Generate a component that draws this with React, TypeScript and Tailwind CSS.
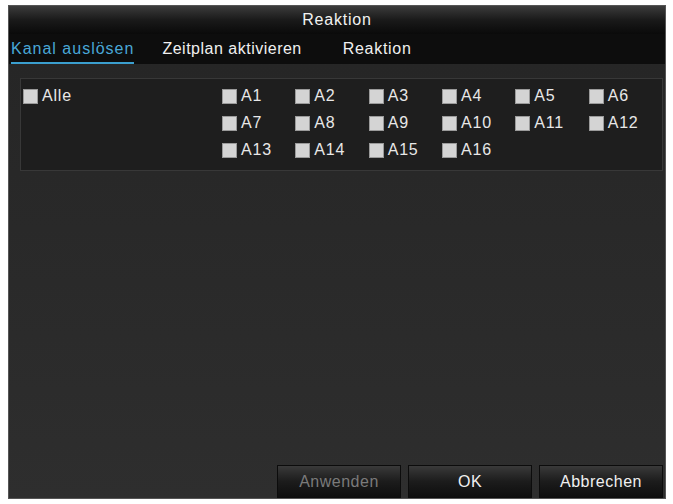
const channels = Array.from({ length: 16 }, (_, i) => `A${i + 1}`);

const Box = () => (
  <span className="inline-block w-[15px] h-[15px] bg-[#d4d4d4] border border-[#9a9a9a] shrink-0" />
);

const Check = ({ label }: { label: string }) => (
  <div className="flex items-center gap-[4px] h-[26px]">
    <Box />
    <span className="text-[16px] text-[#e8e8e8] tracking-[0.8px]">{label}</span>
  </div>
);

const FooterButton = ({ label, disabled }: { label: string; disabled?: boolean }) => (
  <button
    className={`w-[124px] h-[33px] border border-[#0c0c0c] bg-gradient-to-b from-[#3a3a3a] via-[#1c1c1c] to-[#0e0e0e] text-[16px] tracking-[0.5px] ${
      disabled ? "text-[#7a7a7a]" : "text-[#f0f0f0]"
    }`}
  >
    {label}
  </button>
);

export default function App() {
  return (
    <div className="w-[673px] h-[504px] bg-white pt-[5px] pl-[8px]" style={{ fontFamily: '"Liberation Sans", Arial, sans-serif' }}>
      <div className="w-[658px] h-[494px] flex flex-col bg-[#2c2c2c] border border-[#555]">
        <div className="h-[28px] flex items-center justify-center bg-gradient-to-b from-[#3c3c3c] via-[#1a1a1a] to-[#0a0a0a] text-[16px] tracking-[0.8px] text-[#f2f2f2]">
          Reaktion
        </div>
        <div className="h-[30px] flex items-end bg-[#0d0d0d] px-[2px] text-[16px] text-[#f0f0f0]">
          <span className="pb-[1px] border-b-2 border-[#3b9fcf] text-[#49a8d8] tracking-[1px]">Kanal auslösen</span>
          <span className="ml-[28px] pb-[3px] tracking-[0.5px]">Zeitplan aktivieren</span>
          <span className="ml-[41px] pb-[3px] tracking-[0.7px]">Reaktion</span>
        </div>
        <div className="flex-1 flex flex-col bg-gradient-to-b from-[#262626] to-[#2e2e2e] pt-[14px] pl-[11px] pr-[2px]">
          <div className="h-[93px] flex bg-[#1e1e1e] border border-[#383838] pl-[2px] pt-[4px]">
            <div className="w-[199px]">
              <Check label="Alle" />
            </div>
            <div className="grid grid-cols-6 w-[440px] auto-rows-[27px]">
              {channels.map((c) => (
                <Check key={c} label={c} />
              ))}
            </div>
          </div>
          <div className="flex-1" />
          <div className="flex justify-end gap-[7px]">
            <FooterButton label="Anwenden" disabled />
            <FooterButton label="OK" />
            <FooterButton label="Abbrechen" />
          </div>
        </div>
      </div>
    </div>
  );
}
